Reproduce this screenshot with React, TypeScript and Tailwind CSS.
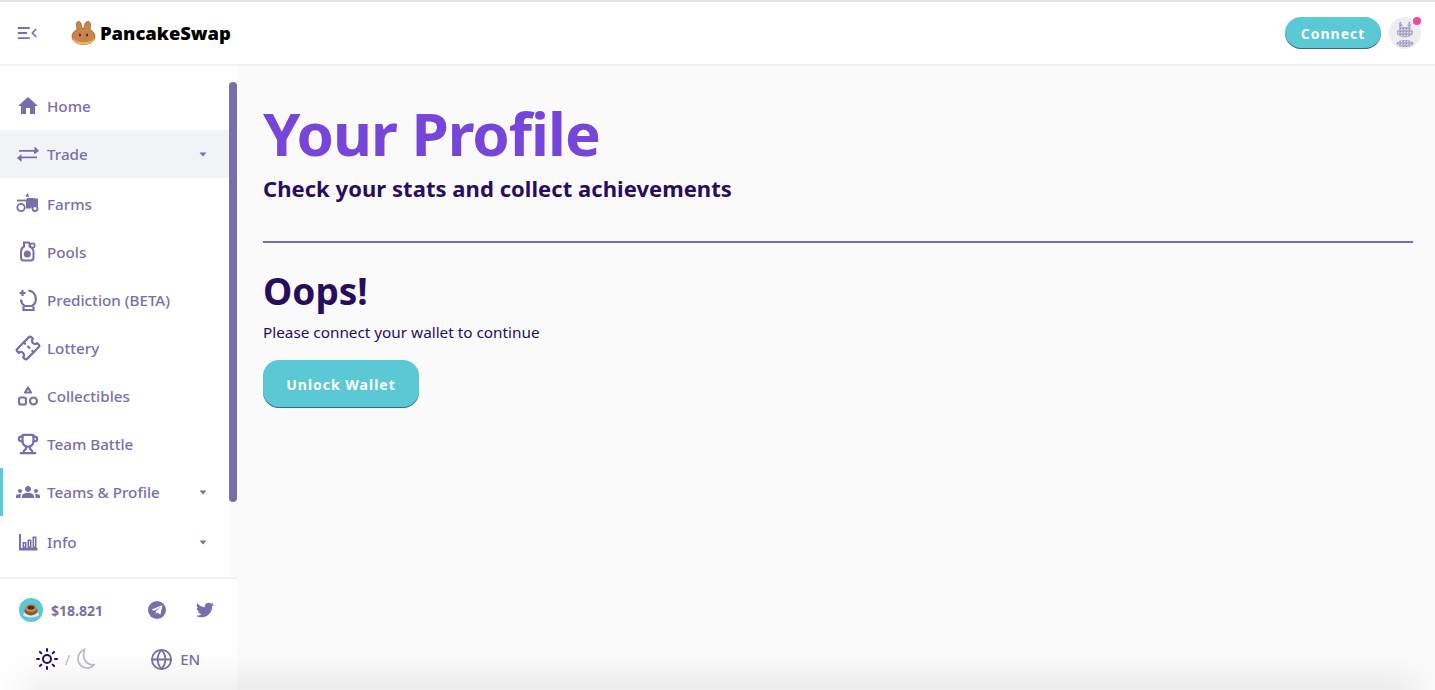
import { ReactNode } from 'react';
import { Globe, Sun, Ticket, Trophy } from 'lucide-react';
import { FaTelegramPlane, FaTwitter } from 'react-icons/fa';

const kanit = "font-['Noto_Sans','Open_Sans',sans-serif]";

function Svg({ children, size = 24 }: { children: ReactNode; size?: number }) {
  return (
    <svg width={size} height={size} viewBox="0 0 24 24" fill="#7a6eaa">
      {children}
    </svg>
  );
}

const HomeIcon = () => (
  <Svg>
    <path d="M10 20v-6h4v6h5v-8h3L12 3 2 12h3v8z" />
  </Svg>
);

const TradeIcon = () => (
  <svg width="24" height="24" viewBox="0 0 24 24" fill="#7a6eaa">
    <path d="M3 8h15.500V5.300a.4.4 0 0 1 .7-.3l3.400 3.300a.6.6 0 0 1 0 .9l-3.400 2.600H18V9.800H3z" />
    <path d="M21 14.400H5.500v-1.900L5 12.400 1.500 15.600a.6.6 0 0 0 0 .9L5 19.400a.4.4 0 0 0 .6-.3v-2.900H21z" />
  </svg>
);

const FarmIcon = () => (
  <svg width="24" height="24" viewBox="0 0 24 24" fill="none" stroke="#7a6eaa" strokeWidth="1.800">
    <path d="M10 4.500l1.500-2 1 2.500" strokeWidth="1.500" />
    <path d="M1 8.500h10" />
    <path d="M11 6h7l1 .5h3V14h-3c-2 0-3.500 1-4 2.500h-5V12c0-1-.2-2 0-3z" fill="#7a6eaa" stroke="none" />
    <circle cx="5" cy="15.500" r="3.700" fill="#fff" />
    <circle cx="19" cy="16.500" r="2.500" fill="#fff" />
  </svg>
);

const PoolIcon = () => (
  <Svg>
    <path
      d="M8 2.500h4.500c.6 0 1 .4 1 1V6.500c2.400.8 4 2.800 4 5.500v5.500c0 1.700-1.300 3-3 3H8c-1.700 0-3-1.300-3-3V12c0-2.700 1.300-4.700 3-5.500z"
      fill="none"
      stroke="#7a6eaa"
      strokeWidth="2"
    />
    <circle cx="11.300" cy="14" r="3.500" />
    <circle cx="16.500" cy="5.500" r="2.200" fill="#fff" stroke="#7a6eaa" strokeWidth="1.700" />
  </Svg>
);

const PredictionIcon = () => (
  <svg width="24" height="24" viewBox="0 0 24 24" fill="none" stroke="#7a6eaa" strokeWidth="2.200">
    <path d="M12.500 2.500a8.500 8.500 0 0 1 3.500 15.500H8.500a8.500 8.500 0 0 1-3.500-6.500" />
    <path d="M6.500 2v6M3.500 5h6" />
    <path d="M7.500 18.500v3.500h10v-3.500" />
  </svg>
);

const CollectiblesIcon = () => (
  <svg width="24" height="24" viewBox="0 0 24 24" fill="none" stroke="#7a6eaa" strokeWidth="2.200">
    <path d="M12 3.500l3 5h-6z" strokeLinejoin="round" />
    <rect x="3" y="13.500" width="7" height="7" rx="2" />
    <circle cx="17.500" cy="17" r="3.500" />
  </svg>
);

const TeamsIcon = () => (
  <svg width="24" height="24" viewBox="0 0 24 24" fill="#7a6eaa">
    <path d="M12 12.750c1.630 0 3.070.39 4.240.9 1.080.48 1.760 1.560 1.760 2.730V18H6v-1.610c0-1.180.68-2.260 1.760-2.730 1.170-.52 2.610-.91 4.240-.91zM4 13c1.100 0 2-.9 2-2s-.9-2-2-2-2 .9-2 2 .9 2 2 2zm1.130 1.100c-.37-.06-.74-.1-1.130-.1-.99 0-1.930.21-2.780.58C.48 14.900 0 15.620 0 16.430V18h4.500v-1.610c0-.83.23-1.610.63-2.290zM20 13c1.100 0 2-.9 2-2s-.9-2-2-2-2 .9-2 2 .9 2 2 2zm4 3.430c0-.81-.48-1.530-1.220-1.850-.85-.37-1.790-.58-2.780-.58-.39 0-.76.04-1.130.1.4.68.63 1.460.63 2.290V18H24v-1.570zM12 6c1.660 0 3 1.340 3 3s-1.340 3-3 3-3-1.340-3-3 1.340-3 3-3z" />
  </svg>
);

const InfoIcon = () => (
  <svg width="24" height="24" viewBox="0 0 24 24" fill="#7a6eaa">
    <path d="M3 4h2v14h16.500v2.500H3z" />
    <path fillRule="evenodd" d="M6.500 12h4v6h-4zm1.600 1.600v2.800h.8v-2.800zM11.500 9.500h4V18h-4zm1.600 1.600v5.300h.8v-5.300zM16.500 6.500h4V18h-4zm1.600 1.600v8.300h.8V8.100z" />
  </svg>
);

const MoonIcon = () => (
  <svg width="24" height="24" viewBox="0 0 24 24" fill="none" stroke="#bdb8d6" strokeWidth="1.700">
    <path d="M11.500 2.500C7 4.500 5 8 5 12c0 5 4 9 9 9 3 0 5.500-1.200 7-3.300-5 .6-9.500-2.700-10.300-7.700-.4-2.600 0-5.300.8-7.500z" />
  </svg>
);

const PancakeBunny = () => (
  <svg width="26" height="26" viewBox="0 0 26 26">
    <path d="M7.500 1.500c1.800 0 2.700 1.700 2.900 3.500l.2 3h2.800l.2-3C14 3.200 15.200 1.500 17 1.500s2.800 1.800 2.600 3.700l-.7 4.300c2.800 1.300 5.100 3.600 5.100 7 0 5.200-5.200 8-11.500 8S1 21.700 1 16.500c0-3.400 2.300-5.700 5.100-7l-.7-4.300C5.200 3.300 5.800 1.500 7.500 1.500z" fill="#cc8548" stroke="#633001" strokeWidth="0.500" />
    <path d="M1.300 17.500c0 4.500 5.200 7 11.200 7s11.200-2.500 11.200-7c-2 3.500-6.500 4.800-11.200 4.800S3.300 21 1.300 17.500z" fill="#f0b869" />
    <ellipse cx="9" cy="15" rx="1.100" ry="1.600" fill="#452a7a" />
    <ellipse cx="16" cy="15" rx="1.100" ry="1.600" fill="#452a7a" />
  </svg>
);

const CakeToken = () => (
  <div className="flex h-6 w-6 items-center justify-center rounded-full bg-[#5ac8d5]">
    <svg width="18" height="18" viewBox="0 0 18 18">
      <ellipse cx="9" cy="13.500" rx="8" ry="3" fill="#e8e4f5" />
      <ellipse cx="9" cy="9.500" rx="6.500" ry="5" fill="#8a5a34" />
      <ellipse cx="9" cy="7" rx="6" ry="4" fill="#c98a4b" />
      <ellipse cx="9" cy="6.500" rx="3.500" ry="2" fill="#4a2a1a" />
    </svg>
  </div>
);

// the placeholder avatar is a dotted bunny, so the fill is a dot pattern
const Avatar = () => (
  <div className="relative h-8 w-8 rounded-full bg-[#eeeeee]">
    <svg width="32" height="32" viewBox="0 0 32 32">
      <defs>
        <pattern id="dots" width="3" height="3" patternUnits="userSpaceOnUse">
          <rect width="3" height="3" fill="#b4b2cf" />
          <rect width="1" height="1" fill="#e4e2f0" />
          <rect x="2" y="2" width="1" height="1" fill="#8f8bb8" />
        </pattern>
      </defs>
      <path d="M11.500 5c1 0 1.700 1 1.900 2.500l.2 2.500h4.800l.2-2.500C18.800 6 19.500 5 20.500 5s1.800 1.200 1.700 2.800l-.5 4c1.500 1 2.300 2.500 2.300 4 0 3-3.500 4.500-8 4.500s-8-1.500-8-4.500c0-1.500.8-3 2.300-4l-.5-4C9.700 6.200 10.500 5 11.500 5z" fill="url(#dots)" />
      <ellipse cx="16" cy="26.500" rx="8.500" ry="3.500" fill="url(#dots)" />
    </svg>
    <div className="absolute right-0 top-0 h-2 w-2 rounded-full bg-[#ed4b9e]" />
  </div>
);

function Caret() {
  return (
    <svg width="8" height="5" viewBox="0 0 8 5" fill="#7a6eaa">
      <path d="M0.500 0.500h7L4 4.500z" />
    </svg>
  );
}

function NavRow({
  icon,
  label,
  caret,
  active,
  marked,
}: {
  icon: ReactNode;
  label: string;
  caret?: boolean;
  active?: boolean;
  marked?: boolean;
}) {
  return (
    <div
      className={`flex h-12 items-center pl-4 pr-[22px] text-[#7a6eaa] ${active ? 'bg-[#f2f3f6]' : ''} ${
        marked ? 'border-l-[3px] border-[#5ac8d5] !pl-[13px]' : ''
      }`}
    >
      <div className="flex w-[31px] shrink-0 items-center">{icon}</div>
      <span className="flex-1 pt-px text-[15.200px] font-medium leading-none">{label}</span>
      {caret && <Caret />}
    </div>
  );
}

function Sidebar() {
  return (
    <aside className="z-10 flex w-[237px] shrink-0 flex-col bg-white">
      <div className="flex min-h-0 flex-1 pt-4">
        <nav className="min-w-0 flex-1">
          <NavRow icon={<HomeIcon />} label="Home" />
          <div className="pb-0.5">
            <NavRow icon={<TradeIcon />} label="Trade" caret active />
          </div>
          <NavRow icon={<FarmIcon />} label="Farms" />
          <NavRow icon={<PoolIcon />} label="Pools" />
          <NavRow icon={<PredictionIcon />} label="Prediction (BETA)" />
          <NavRow icon={<Ticket size={24} color="#7a6eaa" strokeWidth={2.200} className="-rotate-45" />} label="Lottery" />
          <NavRow icon={<CollectiblesIcon />} label="Collectibles" />
          <NavRow icon={<Trophy size={22} color="#7a6eaa" strokeWidth={2.400} className="ml-px" />} label="Team Battle" />
          <div className="pb-0.5">
            <NavRow icon={<TeamsIcon />} label="Teams & Profile" caret marked />
          </div>
          <NavRow icon={<InfoIcon />} label="Info" caret />
        </nav>
        <div className="w-2 shrink-0 bg-[#fbfbfc]">
          <div className="h-[420px] rounded-full bg-[#7a6eaa]" />
        </div>
      </div>
      <footer className="h-[113px] shrink-0 border-t-2 border-[#f2f2f4] px-[19px] pt-[19px] text-[#7a6eaa]">
        <div className="flex h-6 items-center">
          <CakeToken />
          <span className="ml-2 w-[97px] text-[14px] font-bold">$18.821</span>
          <div className="flex h-[18px] w-[18px] items-center justify-center rounded-full bg-[#7a6eaa]">
            <FaTelegramPlane size={12} color="#fff" />
          </div>
          <FaTwitter size={18} color="#7a6eaa" className="ml-[30px]" />
        </div>
        <div className="mt-[21px] flex h-8 items-center pl-4">
          <Sun size={24} color="#280d5f" strokeWidth={2} />
          <span className="ml-[6px] text-[14px] text-[#bdb8d6]">/</span>
          <div className="ml-[3px]">
            <MoonIcon />
          </div>
          <Globe size={23} color="#7a6eaa" strokeWidth={1.900} className="ml-[53px]" />
          <span className="ml-[7px] text-[15px] font-medium">EN</span>
        </div>
      </footer>
    </aside>
  );
}

export default function App() {
  return (
    <div className={`relative flex h-[690px] flex-col overflow-hidden bg-white ${kanit}`}>
      <header className="flex h-[66px] shrink-0 items-center border-y-2 border-t-[#e6e6e6] border-b-[#f2f2f4] bg-white pl-4 pr-[14px]">
        <svg width="22" height="22" viewBox="0 0 24 24" fill="#7a6eaa">
          <path d="M2 5.500h13v2H2zM2 11h10v2H2zM2 16.500h13v2H2z" />
          <path d="M21.500 7l-5 5 5 5 1.200-1.300L19 12l3.700-3.700z" />
        </svg>
        <div className="ml-[33px] flex items-center">
          <PancakeBunny />
          <span className="ml-[3px] text-[18.400px] font-black leading-none text-black">PancakeSwap</span>
        </div>
        <div className="ml-auto flex items-center gap-2">
          <button className="h-8 w-24 rounded-2xl bg-[#5ac8d5] text-[14px] font-bold tracking-[1px] text-white shadow-[inset_0_-1px_0_0_rgba(14,14,44,0.5)]">
            Connect
          </button>
          <Avatar />
        </div>
      </header>
      <div className="flex min-h-0 flex-1">
        <Sidebar />
        <main className="min-w-0 flex-1 bg-[#fafafa] pl-[26px] pr-[22px] pt-[34px]">
          <h1 className="text-[60px] font-bold leading-[66px] tracking-[-1px] text-[#7645d9]">Your Profile</h1>
          <h2 className="mt-1.5 text-[22px] font-bold leading-8 tracking-[0.05px] text-[#280d5f]">Check your stats and collect achievements</h2>
          <div className="mt-[37px] h-0.5 bg-[#7a6eaa]" />
          <h3 className="mt-6 text-[37px] font-bold leading-[48px] text-[#280d5f]">Oops!</h3>
          <p className="mt-[5px] text-[15.300px] leading-6 text-[#280d5f]">Please connect your wallet to continue</p>
          <button className="mt-4 h-12 w-[156px] rounded-2xl bg-[#5ac8d5] text-[14px] font-bold tracking-[1px] text-white shadow-[inset_0_-1px_0_0_rgba(14,14,44,0.5)]">
            Unlock Wallet
          </button>
        </main>
      </div>
      {/* soft shadow of the window edge, over the bottom of the page */}
      <div className="pointer-events-none absolute inset-x-[30px] bottom-[-12px] z-20 h-3 shadow-[0_0_36px_10px_rgba(0,0,0,0.09)]" />
    </div>
  );
}
